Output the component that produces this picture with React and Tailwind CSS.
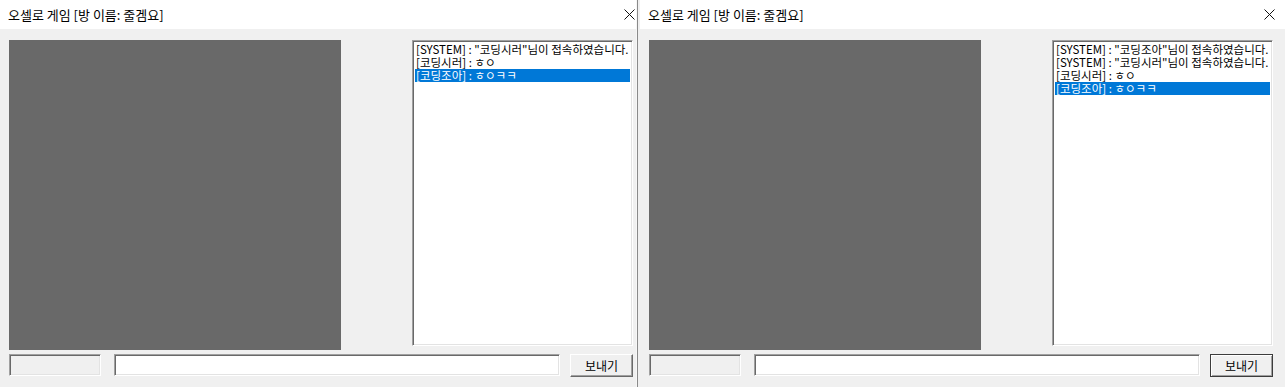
const font = { fontFamily: '"Noto Sans CJK KR", "Noto Sans", sans-serif' };

const sunken =
  'border border-t-[#a0a0a0] border-l-[#a0a0a0] border-r-white border-b-white shadow-[inset_1px_1px_0_#696969,inset_-1px_-1px_0_#e3e3e3]';

function CloseIcon() {
  return (
    <svg width="11" height="11" viewBox="0 0 11 11" className="block">
      <path d="M0.5 0.5 L10.5 10.5 M10.5 0.5 L0.5 10.5" stroke="#111" strokeWidth="1" />
    </svg>
  );
}

function GameWindow({ messages, focused }) {
  return (
    <div className="flex h-full w-full flex-col bg-[#f0f0f0]">
      {/* title bar */}
      <div className="flex h-[29px] w-full shrink-0 items-center bg-white">
        <div className="flex w-[636px] items-center justify-between pl-[8px] pr-[1px]">
          <span className="text-[13px] leading-[15px] text-black">오셀로 게임 [방 이름: 줄겜요]</span>
          <CloseIcon />
        </div>
      </div>

      <div className="flex pl-[9px] pt-[11px]">
        <div className="h-[310px] w-[332px] bg-[#696969]" />
        <div className={`ml-[71px] h-[306px] w-[221px] overflow-hidden bg-white pl-[2px] pr-[2px] pt-[2px] ${sunken}`}>
          {messages.map((m, i) => {
            const sel = i === messages.length - 1;
            return (
              <div
                key={i}
                className={`h-[13px] overflow-visible whitespace-nowrap pl-[1px] text-[11.5px] leading-[13px] ${sel ? 'bg-[#0078d7] text-white' : 'text-black'}`}
              >
                {m}
              </div>
            );
          })}
        </div>
      </div>

      <div className="flex items-start pl-[9px] pt-[4px]">
        <div className={`h-[22px] w-[92px] bg-[#f0f0f0] ${sunken}`} />
        <div className={`ml-[13px] h-[22px] w-[446px] bg-white ${sunken}`} />
        <button
          className={`ml-[10px] flex h-[23px] w-[63px] items-center justify-center bg-[#f0f0f0] text-[12px] text-black ${
            focused
              ? 'border border-[#3c3c3c] shadow-[inset_1px_1px_0_#fff,inset_-1px_-1px_0_#a0a0a0]'
              : 'border border-t-white border-l-white border-r-[#696969] border-b-[#696969] shadow-[inset_-1px_-1px_0_#a0a0a0]'
          }`}
          style={font}
        >
          보내기
        </button>
      </div>
    </div>
  );
}

export default function App() {
  const left = [
    '[SYSTEM] : "코딩시러"님이 접속하였습니다.',
    '[코딩시러] : ㅎㅇ',
    '[코딩조아] : ㅎㅇㅋㅋ',
  ];
  const right = [
    '[SYSTEM] : "코딩조아"님이 접속하였습니다.',
    '[SYSTEM] : "코딩시러"님이 접속하였습니다.',
    '[코딩시러] : ㅎㅇ',
    '[코딩조아] : ㅎㅇㅋㅋ',
  ];
  return (
    <div className="flex h-[387px] w-[1285px] overflow-hidden bg-[#f0f0f0]" style={font}>
      <div className="flex h-full w-[638px] shrink-0">
        <div className="h-full w-[636px] shrink-0">
          <GameWindow messages={left} />
        </div>
        <div className="h-full w-[1px] bg-[#f7f7f7]" />
        <div className="h-full w-[1px] bg-[#8a8a8a]" />
      </div>
      <div className="flex h-full flex-1">
        <div className="h-full w-[2px] shrink-0 bg-[#f0f0f0]" />
        <div className="h-full flex-1">
          <GameWindow messages={right} focused />
        </div>
      </div>
    </div>
  );
}
